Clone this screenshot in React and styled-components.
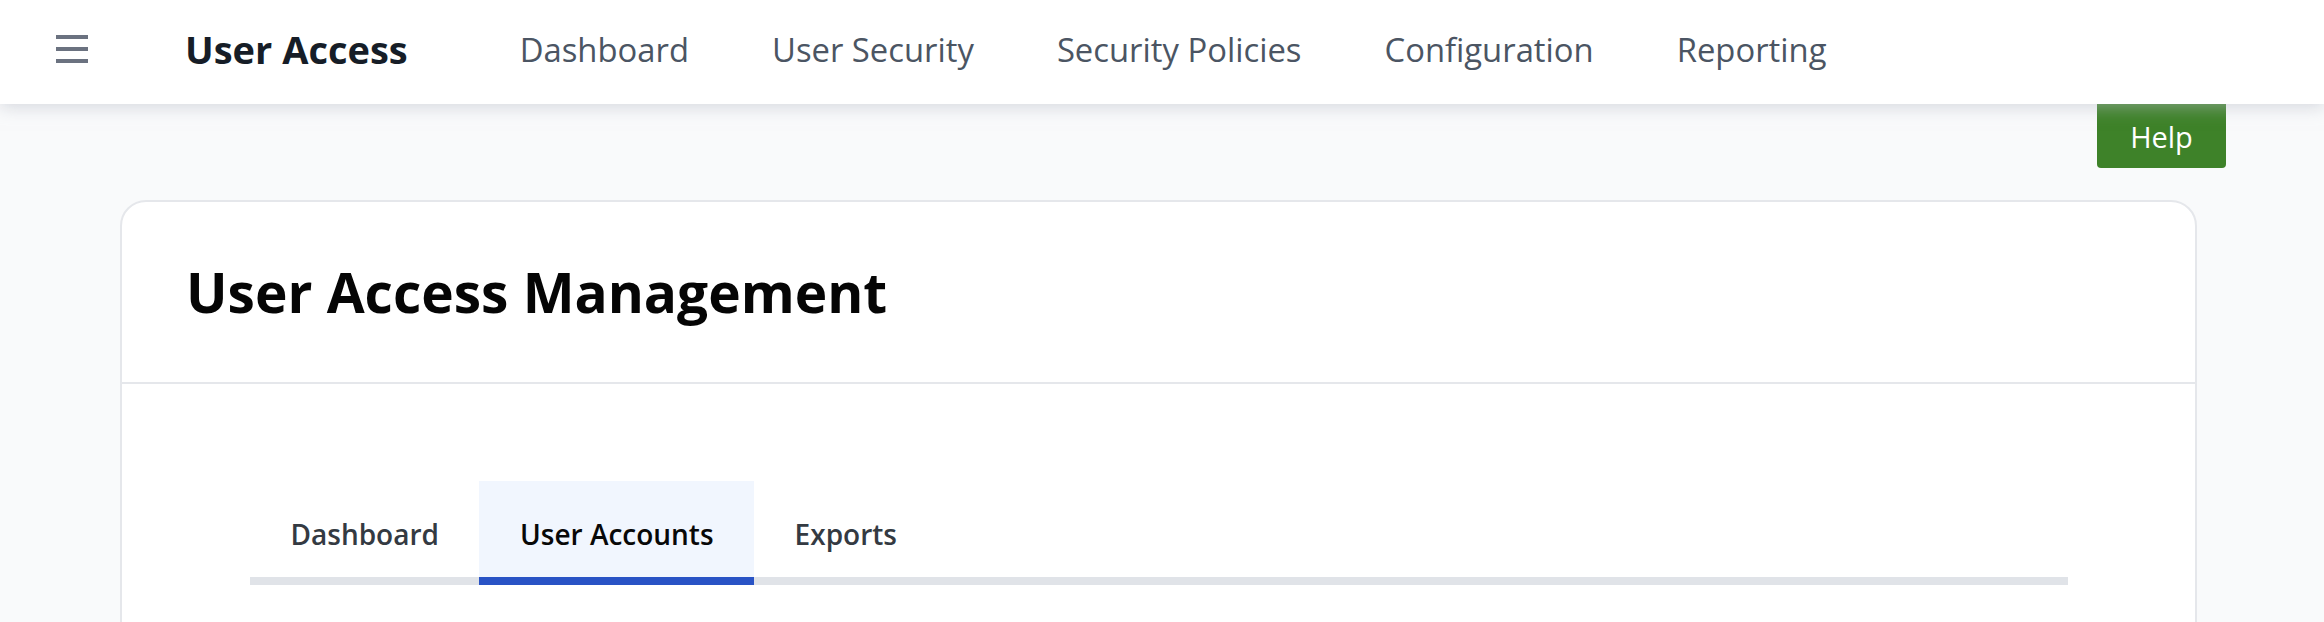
import React, { useState } from 'react';
import styled, { createGlobalStyle } from 'styled-components';

const GlobalStyle = createGlobalStyle`
  html, body {
    margin: 0;
    padding: 0;
    background: #f9fafb;
    font-family: 'Open Sans', 'Noto Sans', sans-serif;
  }
  * {
    box-sizing: border-box;
  }
`;

const Page = styled.div`
  min-height: 622px;
  overflow: hidden;
`;

const TopBar = styled.header`
  position: relative;
  z-index: 2;
  height: 104px;
  display: flex;
  align-items: center;
  padding: 0 0 6px 56px;
  background: #ffffff;
  box-shadow: 0 3px 16px rgba(184, 188, 198, 0.55);
`;

const MenuButton = styled.button`
  display: flex;
  width: 32px;
  height: 28px;
  padding: 0;
  border: none;
  background: none;
  color: #6b7280;
  cursor: pointer;
`;

const Brand = styled.div`
  margin-left: 97px;
  margin-right: 112px;
  font-size: 38px;
  font-weight: 700;
  color: #161d27;
  white-space: nowrap;
`;

const NavList = styled.nav`
  display: flex;
  align-items: center;
  gap: 83px;
`;

const NavLink = styled.a`
  font-size: 32.8px;
  color: #4b5563;
  text-decoration: none;
  white-space: nowrap;
  cursor: pointer;
`;

const Toolbar = styled.div`
  display: flex;
  justify-content: flex-end;
  padding-right: 98px;
`;

const HelpButton = styled.button`
  width: 129px;
  height: 64px;
  border: none;
  border-radius: 0 0 4px 4px;
  background: #3e8229;
  color: #ffffff;
  font-family: inherit;
  font-size: 29px;
  cursor: pointer;
`;

const Card = styled.section`
  margin: 32px 127px 0 120px;
  background: #ffffff;
  border: 2px solid #e5e7eb;
  border-radius: 26px 26px 0 0;
  min-height: 600px;
`;

const CardHeader = styled.div`
  padding: 56px 64px;
  border-bottom: 2px solid #e5e7eb;
`;

const Title = styled.h1`
  margin: 0;
  font-size: 55px;
  line-height: 68px;
  font-weight: 700;
  color: #050505;
`;

const CardBody = styled.div`
  padding: 97px 127px 0 128px;
`;

const TabList = styled.div`
  display: flex;
  border-bottom: 8px solid #e0e3e8;
`;

const Tab = styled.button`
  height: 87px;
  margin-bottom: -8px;
  padding: 9px 40.5px 0;
  border: none;
  border-bottom: 8px solid ${p => (p.$active ? '#2953c5' : 'transparent')};
  background: ${p => (p.$active ? '#f1f6fe' : 'transparent')};
  color: ${p => (p.$active ? '#080808' : '#343a42')};
  font-family: inherit;
  font-size: 28px;
  font-weight: 600;
  box-sizing: content-box;
  cursor: pointer;
`;

const MenuIcon = () => (
  <svg width="32" height="28" viewBox="0 0 32 28" fill="currentColor">
    <rect x="0" y="0" width="32" height="4" />
    <rect x="0" y="12" width="32" height="4" />
    <rect x="0" y="24" width="32" height="4" />
  </svg>
);

const navItems = ['Dashboard', 'User Security', 'Security Policies', 'Configuration', 'Reporting'];
const tabs = ['Dashboard', 'User Accounts', 'Exports'];

export default function App() {
  const [activeTab, setActiveTab] = useState('User Accounts');

  return (
    <Page>
      <GlobalStyle />
      <TopBar>
        <MenuButton aria-label="Menu">
          <MenuIcon />
        </MenuButton>
        <Brand>User Access</Brand>
        <NavList>
          {navItems.map(item => (
            <NavLink key={item}>{item}</NavLink>
          ))}
        </NavList>
      </TopBar>
      <Toolbar>
        <HelpButton>Help</HelpButton>
      </Toolbar>
      <Card>
        <CardHeader>
          <Title>User Access Management</Title>
        </CardHeader>
        <CardBody>
          <TabList>
            {tabs.map(tab => (
              <Tab
                key={tab}
                $active={tab === activeTab}
                onClick={() => setActiveTab(tab)}
              >
                {tab}
              </Tab>
            ))}
          </TabList>
        </CardBody>
      </Card>
    </Page>
  );
}
